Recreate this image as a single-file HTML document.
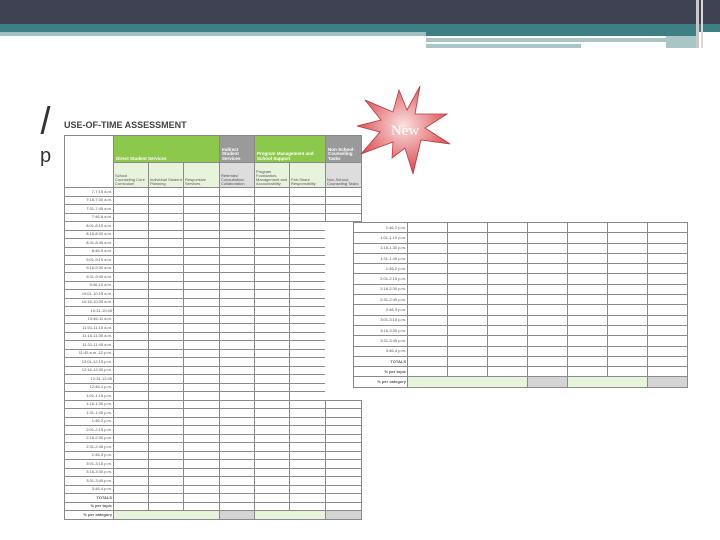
<!DOCTYPE html>
<html><head><meta charset="utf-8"><style>
*{margin:0;padding:0;box-sizing:border-box}
body{width:720px;height:540px;background:#fff;position:relative;overflow:hidden;font-family:"Liberation Sans",sans-serif}
.a{position:absolute}
table{border-collapse:collapse;position:absolute;table-layout:fixed}
td{border:1px solid #8a8a8a;font-size:4px;color:#555;padding:0 1px;overflow:hidden;white-space:nowrap;line-height:1}
.lb{text-align:right}
.g{background:#8cc84b;color:#fff;font-weight:bold;font-size:4.5px;vertical-align:bottom;padding:1px 2px;white-space:normal}
.gr{background:#9a9a9a;color:#fff;font-weight:bold;font-size:4.5px;vertical-align:bottom;padding:1px 2px;white-space:normal}
.lg{background:#e8f3dc;font-size:4px;vertical-align:bottom;white-space:normal;padding:1px}
.lgr{background:#ddd;font-size:4px;vertical-align:bottom;white-space:normal;padding:1px}
.pg{background:#e8f3dc}.pgr{background:#d4d4d4}
</style></head><body>
<div class="a" style="left:0;top:0;width:720px;height:24px;background:#3f4253"></div>
<div class="a" style="left:0;top:24px;width:720px;height:8px;background:#3d7f85"></div>
<div class="a" style="left:0;top:32px;width:426px;height:4px;background:#9fbfc0"></div>
<div class="a" style="left:426px;top:32px;width:270px;height:4px;background:#3d7f85"></div>
<div class="a" style="left:426px;top:38px;width:240px;height:4px;background:#a9c6c7"></div>
<div class="a" style="left:426px;top:44px;width:155px;height:4px;background:#a9c6c7"></div>
<div class="a" style="left:666px;top:36px;width:30px;height:12px;background:#a9c6c7"></div>
<div class="a" style="left:696px;top:0;width:3px;height:48px;background:#c8c8c8"></div>
<div class="a" style="left:701px;top:0;width:2px;height:48px;background:#d8d8d8"></div>
<div class="a" style="left:44px;top:106px;width:3px;height:28px;background:#333;transform:skewX(-14deg)"></div>
<div class="a" style="left:40px;top:145px;font-size:20px;color:#333">p</div>
<div class="a" style="left:64px;top:120px;font-size:9px;font-weight:bold;color:#444">USE-OF-TIME ASSESSMENT</div>
<table style="left:64px;top:135px;width:297px;z-index:1">
<colgroup><col style="width:49px"><col style="width:35px"><col style="width:35px"><col style="width:36px"><col style="width:35px"><col style="width:35px"><col style="width:36px"><col style="width:36px"></colgroup>
<tr style="height:27px"><td rowspan="2" style="border-bottom:1px solid #8a8a8a"></td><td class="g" colspan="3">Direct Student Services</td><td class="gr">Indirect Student Services</td><td class="g" colspan="2">Program Management and School Support</td><td class="gr">Non-School-Counseling Tasks</td></tr>
<tr style="height:25px"><td class="lg">School Counseling Core Curriculum</td><td class="lg">Individual Student Planning</td><td class="lg">Responsive Services</td><td class="lgr">Referrals/ Consultation/ Collaboration</td><td class="lg">Program Foundation, Management and Accountability</td><td class="lg">Fair-Share Responsibility</td><td class="lgr">Non-School-Counseling Tasks</td></tr>
<tbody id="lt"></tbody>
</table>
<div class="a" style="left:325px;top:222px;width:40px;height:178px;background:#fff;z-index:2"></div>
<table style="left:353px;top:222px;width:334px;z-index:3" id="rt"></table>
<svg class="a" style="left:355px;top:86px;z-index:4" width="100" height="88" viewBox="0 0 100 88">
<defs><radialGradient id="r" cx="50%" cy="45%" r="55%"><stop offset="0" stop-color="#fbe0e0"/><stop offset="1" stop-color="#d9464a"/></radialGradient></defs>
<polygon points="65,0 60,28 92,28 70,42 95,58 66,54 58,88 50,62 37,72 38,56 6,68 25,46 2,40 26,34 10,14 38,26 44,4 52,24" fill="url(#r)" stroke="#b8383c" stroke-width="0.8"/>
<text x="50" y="49" font-family="Liberation Serif,serif" font-size="15" fill="#fff" text-anchor="middle">New</text>
</svg>
<script>
var t=["7-7:15 a.m.","7:16-7:30 a.m.","7:31-7:45 a.m.","7:46-8 a.m.","8:01-8:15 a.m.","8:16-8:30 a.m.","8:31-8:45 a.m.","8:46-9 a.m.","9:01-9:15 a.m.","9:16-9:30 a.m.","9:31-9:45 a.m.","9:46-10 a.m.","10:01-10:15 a.m.","10:16-10:30 a.m.","10:31-10:45","10:46-11 a.m.","11:01-11:15 a.m.","11:16-11:30 a.m.","11:31-11:45 a.m.","11:45 a.m.-12 p.m.","12:01-12:15 p.m.","12:16-12:30 p.m.","12:31-12:45","12:46-1 p.m.","1:01-1:15 p.m.","1:16-1:30 p.m.","1:31-1:45 p.m.","1:46-2 p.m.","2:01-2:15 p.m.","2:16-2:30 p.m.","2:31-2:45 p.m.","2:46-3 p.m.","3:01-3:15 p.m.","3:16-3:30 p.m.","3:31-3:45 p.m.","3:46-4 p.m."];
var h="";t.forEach(function(x){h+='<tr style="height:8.5px"><td class="lb">'+x+'</td>'+'<td></td>'.repeat(7)+'</tr>'});
h+='<tr style="height:8.5px"><td class="lb"><b>TOTALS</b></td>'+'<td></td>'.repeat(7)+'</tr>';
h+='<tr style="height:8.5px"><td class="lb"><b>% per topic</b></td>'+'<td></td>'.repeat(7)+'</tr>';
h+='<tr style="height:8.5px"><td class="lb"><b>% per category</b></td><td class="pg" colspan="3"></td><td class="pgr"></td><td class="pg" colspan="2"></td><td class="pgr"></td></tr>';
document.getElementById('lt').innerHTML=h;
var r=["1:46-2 p.m.","1:01-1:15 p.m.","1:16-1:30 p.m.","1:31-1:45 p.m.","1:46-2 p.m.","2:01-2:15 p.m.","2:16-2:30 p.m.","2:31-2:45 p.m.","2:46-3 p.m.","3:01-3:15 p.m.","3:16-3:30 p.m.","3:31-3:45 p.m.","3:46-4 p.m."];
var g='<colgroup><col style="width:54px"><col style="width:40px"><col style="width:40px"><col style="width:40px"><col style="width:40px"><col style="width:40px"><col style="width:40px"><col style="width:40px"></colgroup>';
r.forEach(function(x){g+='<tr style="height:10.3px"><td class="lb">'+x+'</td>'+'<td></td>'.repeat(7)+'</tr>'});
g+='<tr style="height:10.3px"><td class="lb"><b>TOTALS</b></td>'+'<td></td>'.repeat(7)+'</tr>';
g+='<tr style="height:10.3px"><td class="lb"><b>% per topic</b></td>'+'<td></td>'.repeat(7)+'</tr>';
g+='<tr style="height:10.3px"><td class="lb"><b>% per category</b></td><td class="pg" colspan="3"></td><td class="pgr"></td><td class="pg" colspan="2"></td><td class="pgr"></td></tr>';
document.getElementById('rt').innerHTML=g;
</script>
</body></html>
